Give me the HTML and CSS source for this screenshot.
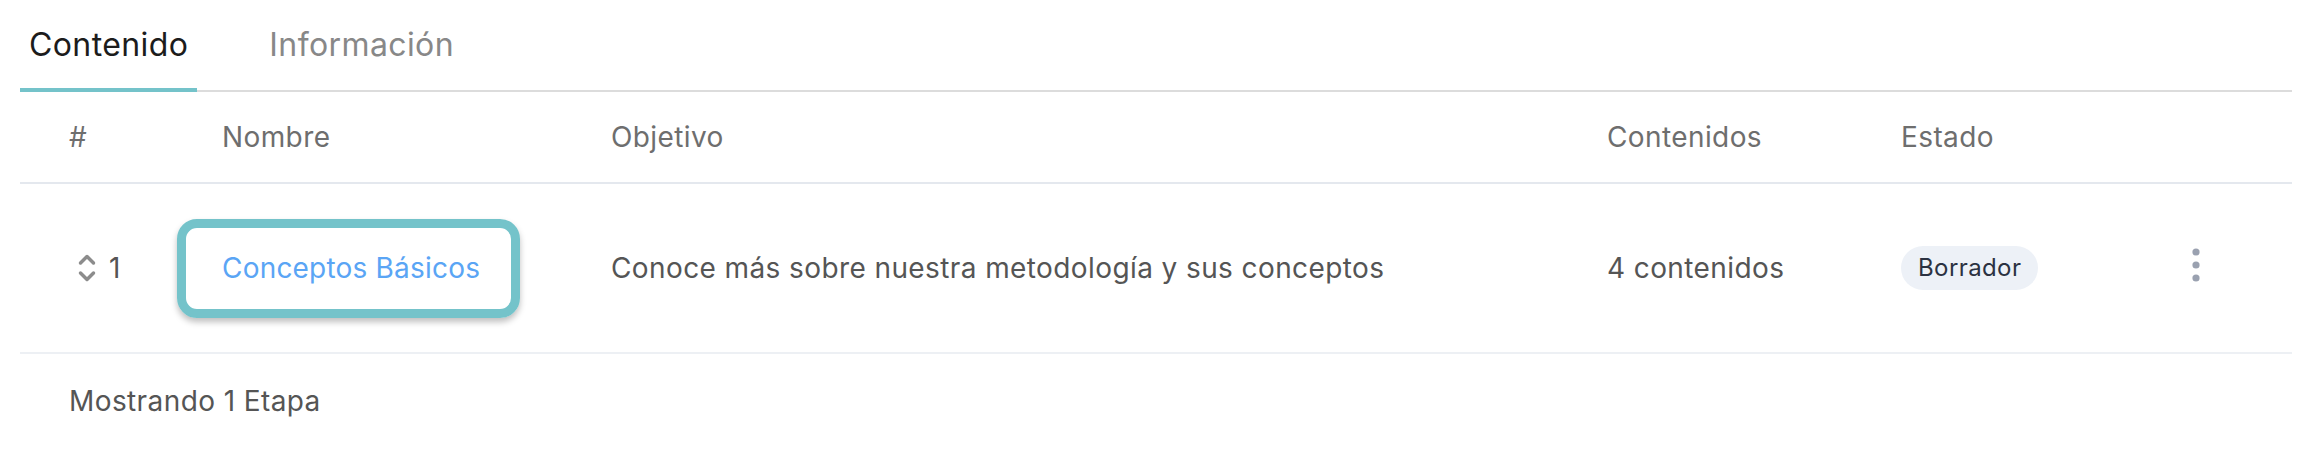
FILE: index.html
```html
<!DOCTYPE html>
<html lang="es">
<head>
    <meta charset="UTF-8">
    <meta name="viewport" content="width=device-width, initial-scale=1.0">
    <title>Etapas</title>
    <link rel="stylesheet" href="styles.css">
</head>
<body>
    <div class="page">
        <!-- pestañas -->
        <nav class="tabs">
            <a class="tab active">Contenido</a>
            <a class="tab">Información</a>
        </nav>

        <!-- tabla de etapas -->
        <div class="stage-table">
            <div class="row head">
                <div class="cell num">#</div>
                <div class="cell">Nombre</div>
                <div class="cell">Objetivo</div>
                <div class="cell">Contenidos</div>
                <div class="cell">Estado</div>
                <div class="cell"></div>
            </div>
            <div class="row">
                <div class="cell order">
                    <svg class="sort-icon" width="18" height="30" viewBox="0 0 18 30">
                        <polyline points="2.5,10 9,3.5 15.5,10" />
                        <polyline points="2.5,20 9,26.5 15.5,20" />
                    </svg>
                    <span>1</span>
                </div>
                <div class="cell">
                    <span class="name-edit">Conceptos Básicos</span>
                </div>
                <div class="cell">Conoce más sobre nuestra metodología y sus conceptos</div>
                <div class="cell">4 contenidos</div>
                <div class="cell"><span class="badge">Borrador</span></div>
                <div class="cell actions">
                    <svg class="kebab" width="8" height="34" viewBox="0 0 8 34">
                        <circle cx="4" cy="4" r="3.6" />
                        <circle cx="4" cy="17" r="3.6" />
                        <circle cx="4" cy="30" r="3.6" />
                    </svg>
                </div>
            </div>
        </div>

        <p class="summary">Mostrando 1 Etapa</p>
    </div>
</body>
</html>
```

FILE: styles.css
```css
:root {
    --teal: #74c3ca;
    --line: #e4e8ee;
    --text: #555555;
    --muted: #6e6e6e;
}

* {
    margin: 0;
    padding: 0;
    box-sizing: border-box;
}

body {
    background: #ffffff;
    font-family: Inter, "Noto Sans", sans-serif;
    color: var(--text);
    letter-spacing: 0.4px;
}

.page {
    padding: 0 10px 0 20px;
}

/* pestañas */
.tabs {
    display: flex;
    gap: 63px;
    height: 92px;
    border-bottom: 2px solid #dcdcdc;
}

.tab {
    display: flex;
    align-items: center;
    padding: 0 9px;
    margin-bottom: -2px;
    font-size: 32px;
    color: #888888;
    border-bottom: 4px solid transparent;
}

.tab.active {
    color: #1c1c1c;
    border-bottom-color: var(--teal);
}

/* tabla */
.row {
    display: grid;
    grid-template-columns: 202px 389px 996px 294px 1fr 116px;
    align-items: center;
    height: 170px;
    border-bottom: 2px solid #edf0f4;
    font-size: 28px;
}

.row.head {
    height: 92px;
    border-bottom-color: var(--line);
    color: var(--muted);
}

.cell.num {
    padding-left: 49px;
}

.cell.order {
    display: flex;
    align-items: center;
    gap: 13px;
    padding-left: 58px;
}

.sort-icon polyline {
    fill: none;
    stroke: #8c8c8c;
    stroke-width: 3.5;
    stroke-linecap: round;
    stroke-linejoin: round;
}

.name-edit {
    display: inline-flex;
    align-items: center;
    height: 99px;
    margin-left: -45px;
    padding: 0 31px 0 36px;
    border: 9px solid var(--teal);
    border-radius: 20px;
    color: #5aa5f5;
    letter-spacing: 0.2px;
    box-shadow: 0 4px 6px rgba(0, 0, 0, 0.25);
}

.badge {
    display: inline-block;
    padding: 0 17px;
    line-height: 44px;
    border-radius: 22px;
    background: #edf1f7;
    color: #2b3242;
    font-size: 24px;
}

.actions {
    padding-left: 16px;
}

.kebab circle {
    fill: #9aa1b0;
}

.summary {
    padding: 30px 0 0 49px;
    font-size: 28px;
}
```
